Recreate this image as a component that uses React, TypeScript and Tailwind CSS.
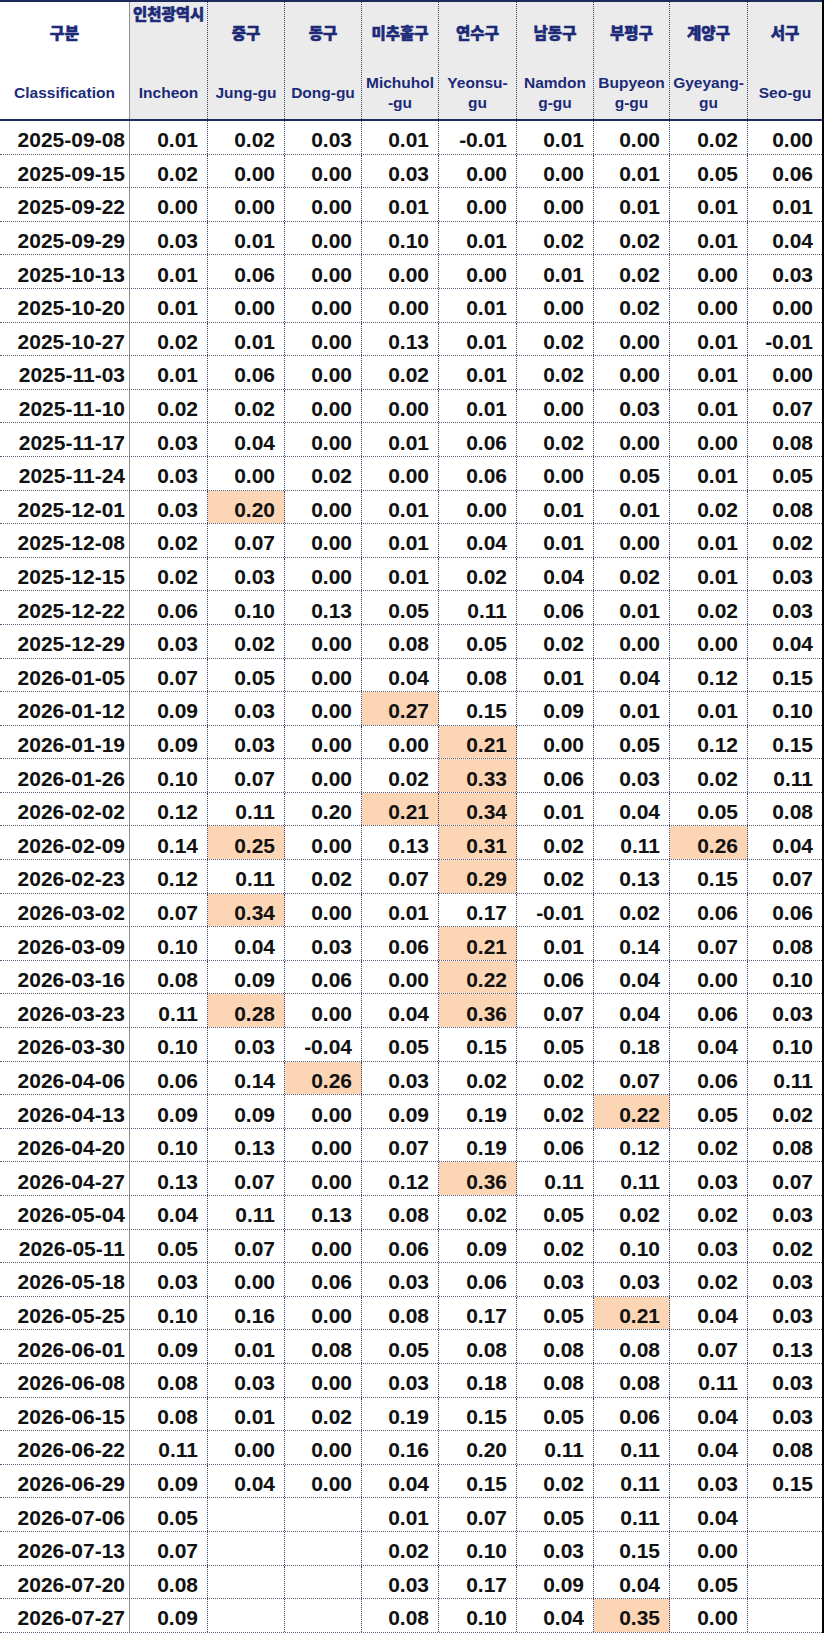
import React from "react";

const COLS =
  "grid grid-cols-[130px_78px_77px_77px_77px_78px_77px_76px_78px_74px]";

type Head = { ko: string; en: React.ReactNode };

const heads: Head[] = [
  { ko: "인천광역시", en: "Incheon" },
  { ko: "중구", en: "Jung-gu" },
  { ko: "동구", en: "Dong-gu" },
  { ko: "미추홀구", en: <>Michuhol<br />-gu</> },
  { ko: "연수구", en: <>Yeonsu-<br />gu</> },
  { ko: "남동구", en: <>Namdon<br />g-gu</> },
  { ko: "부평구", en: <>Bupyeon<br />g-gu</> },
  { ko: "계양구", en: <>Gyeyang-<br />gu</> },
  { ko: "서구", en: "Seo-gu" },
];

// "*" marks a highlighted cell, "" is an empty cell
const rows: [string, string[]][] = [
  ["2025-09-08", ["0.01", "0.02", "0.03", "0.01", "-0.01", "0.01", "0.00", "0.02", "0.00"]],
  ["2025-09-15", ["0.02", "0.00", "0.00", "0.03", "0.00", "0.00", "0.01", "0.05", "0.06"]],
  ["2025-09-22", ["0.00", "0.00", "0.00", "0.01", "0.00", "0.00", "0.01", "0.01", "0.01"]],
  ["2025-09-29", ["0.03", "0.01", "0.00", "0.10", "0.01", "0.02", "0.02", "0.01", "0.04"]],
  ["2025-10-13", ["0.01", "0.06", "0.00", "0.00", "0.00", "0.01", "0.02", "0.00", "0.03"]],
  ["2025-10-20", ["0.01", "0.00", "0.00", "0.00", "0.01", "0.00", "0.02", "0.00", "0.00"]],
  ["2025-10-27", ["0.02", "0.01", "0.00", "0.13", "0.01", "0.02", "0.00", "0.01", "-0.01"]],
  ["2025-11-03", ["0.01", "0.06", "0.00", "0.02", "0.01", "0.02", "0.00", "0.01", "0.00"]],
  ["2025-11-10", ["0.02", "0.02", "0.00", "0.00", "0.01", "0.00", "0.03", "0.01", "0.07"]],
  ["2025-11-17", ["0.03", "0.04", "0.00", "0.01", "0.06", "0.02", "0.00", "0.00", "0.08"]],
  ["2025-11-24", ["0.03", "0.00", "0.02", "0.00", "0.06", "0.00", "0.05", "0.01", "0.05"]],
  ["2025-12-01", ["0.03", "*0.20", "0.00", "0.01", "0.00", "0.01", "0.01", "0.02", "0.08"]],
  ["2025-12-08", ["0.02", "0.07", "0.00", "0.01", "0.04", "0.01", "0.00", "0.01", "0.02"]],
  ["2025-12-15", ["0.02", "0.03", "0.00", "0.01", "0.02", "0.04", "0.02", "0.01", "0.03"]],
  ["2025-12-22", ["0.06", "0.10", "0.13", "0.05", "0.11", "0.06", "0.01", "0.02", "0.03"]],
  ["2025-12-29", ["0.03", "0.02", "0.00", "0.08", "0.05", "0.02", "0.00", "0.00", "0.04"]],
  ["2026-01-05", ["0.07", "0.05", "0.00", "0.04", "0.08", "0.01", "0.04", "0.12", "0.15"]],
  ["2026-01-12", ["0.09", "0.03", "0.00", "*0.27", "0.15", "0.09", "0.01", "0.01", "0.10"]],
  ["2026-01-19", ["0.09", "0.03", "0.00", "0.00", "*0.21", "0.00", "0.05", "0.12", "0.15"]],
  ["2026-01-26", ["0.10", "0.07", "0.00", "0.02", "*0.33", "0.06", "0.03", "0.02", "0.11"]],
  ["2026-02-02", ["0.12", "0.11", "0.20", "*0.21", "*0.34", "0.01", "0.04", "0.05", "0.08"]],
  ["2026-02-09", ["0.14", "*0.25", "0.00", "0.13", "*0.31", "0.02", "0.11", "*0.26", "0.04"]],
  ["2026-02-23", ["0.12", "0.11", "0.02", "0.07", "*0.29", "0.02", "0.13", "0.15", "0.07"]],
  ["2026-03-02", ["0.07", "*0.34", "0.00", "0.01", "0.17", "-0.01", "0.02", "0.06", "0.06"]],
  ["2026-03-09", ["0.10", "0.04", "0.03", "0.06", "*0.21", "0.01", "0.14", "0.07", "0.08"]],
  ["2026-03-16", ["0.08", "0.09", "0.06", "0.00", "*0.22", "0.06", "0.04", "0.00", "0.10"]],
  ["2026-03-23", ["0.11", "*0.28", "0.00", "0.04", "*0.36", "0.07", "0.04", "0.06", "0.03"]],
  ["2026-03-30", ["0.10", "0.03", "-0.04", "0.05", "0.15", "0.05", "0.18", "0.04", "0.10"]],
  ["2026-04-06", ["0.06", "0.14", "*0.26", "0.03", "0.02", "0.02", "0.07", "0.06", "0.11"]],
  ["2026-04-13", ["0.09", "0.09", "0.00", "0.09", "0.19", "0.02", "*0.22", "0.05", "0.02"]],
  ["2026-04-20", ["0.10", "0.13", "0.00", "0.07", "0.19", "0.06", "0.12", "0.02", "0.08"]],
  ["2026-04-27", ["0.13", "0.07", "0.00", "0.12", "*0.36", "0.11", "0.11", "0.03", "0.07"]],
  ["2026-05-04", ["0.04", "0.11", "0.13", "0.08", "0.02", "0.05", "0.02", "0.02", "0.03"]],
  ["2026-05-11", ["0.05", "0.07", "0.00", "0.06", "0.09", "0.02", "0.10", "0.03", "0.02"]],
  ["2026-05-18", ["0.03", "0.00", "0.06", "0.03", "0.06", "0.03", "0.03", "0.02", "0.03"]],
  ["2026-05-25", ["0.10", "0.16", "0.00", "0.08", "0.17", "0.05", "*0.21", "0.04", "0.03"]],
  ["2026-06-01", ["0.09", "0.01", "0.08", "0.05", "0.08", "0.08", "0.08", "0.07", "0.13"]],
  ["2026-06-08", ["0.08", "0.03", "0.00", "0.03", "0.18", "0.08", "0.08", "0.11", "0.03"]],
  ["2026-06-15", ["0.08", "0.01", "0.02", "0.19", "0.15", "0.05", "0.06", "0.04", "0.03"]],
  ["2026-06-22", ["0.11", "0.00", "0.00", "0.16", "0.20", "0.11", "0.11", "0.04", "0.08"]],
  ["2026-06-29", ["0.09", "0.04", "0.00", "0.04", "0.15", "0.02", "0.11", "0.03", "0.15"]],
  ["2026-07-06", ["0.05", "", "", "0.01", "0.07", "0.05", "0.11", "0.04", ""]],
  ["2026-07-13", ["0.07", "", "", "0.02", "0.10", "0.03", "0.15", "0.00", ""]],
  ["2026-07-20", ["0.08", "", "", "0.03", "0.17", "0.09", "0.04", "0.05", ""]],
  ["2026-07-27", ["0.09", "", "", "0.08", "0.10", "0.04", "*0.35", "0.00", ""]],
];

const KO = "font-['Noto_Sans_CJK_KR',sans-serif] font-black [-webkit-text-stroke:0.5px_currentColor]";

function HeaderRow() {
  return (
    <div className={`${COLS} h-[121px] border-t-2 border-b-2 border-[#1f2a5c] text-[#1c2a78] font-bold`}>
      <div className="flex flex-col items-center border-r border-solid border-r-[#8f8f8f] bg-white">
        <div className={`mt-[20px] h-[20px] text-[16px] leading-[20px] ${KO}`}>구분</div>
        <div className="mt-[31px] flex h-[40px] items-center text-[15.5px] leading-[20px] font-['Liberation_Sans',Arial,sans-serif]">
          Classification
        </div>
      </div>
      {heads.map((h, i) => {
        const first = i === 0;
        const last = i === heads.length - 1;
        return (
          <div
            key={i}
            className={`flex flex-col items-center overflow-hidden bg-[#ebebeb] ${
              last ? "" : "border-r border-dotted border-r-[#39406a]"
            }`}
          >
            <div
              className={`h-[20px] whitespace-nowrap text-[15.5px] leading-[20px] ${KO} ${
                first ? "mt-[1px] ml-[3px] self-start" : "mt-[20px]"
              }`}
            >
              {h.ko}
            </div>
            <div
              className={`flex h-[40px] items-center whitespace-nowrap text-center text-[15.5px] leading-[20px] font-['Liberation_Sans',Arial,sans-serif] ${
                first ? "mt-[50px]" : "mt-[31px]"
              }`}
            >
              <span>{h.en}</span>
            </div>
          </div>
        );
      })}
    </div>
  );
}

function DataRow({ date, vals }: { date: string; vals: string[] }) {
  return (
    <div className={`${COLS} h-[33.6px] border-b border-dotted border-b-[#555a70] text-[21px] leading-none font-bold text-[#111] font-['Liberation_Sans',Arial,sans-serif]`}>
      <div className="flex items-center justify-end border-r border-solid border-r-[#8f8f8f] pt-[5px] pr-[4px]">
        {date}
      </div>
      {vals.map((v, i) => {
        const hot = v.startsWith("*");
        const last = i === vals.length - 1;
        return (
          <div
            key={i}
            className={`flex items-center justify-end pt-[5px] pr-[9px] ${hot ? "bg-[#fcd5b4]" : ""} ${
              last ? "" : "border-r border-dotted border-r-[#39406a]"
            }`}
          >
            {hot ? v.slice(1) : v}
          </div>
        );
      })}
    </div>
  );
}

export default function App() {
  return (
    <div className="min-h-[1637px] w-[827px] bg-white">
      <div className="w-[824px] border-r-2 border-black">
        <HeaderRow />
        {rows.map(([d, v]) => (
          <DataRow key={d} date={d} vals={v} />
        ))}
      </div>
    </div>
  );
}
